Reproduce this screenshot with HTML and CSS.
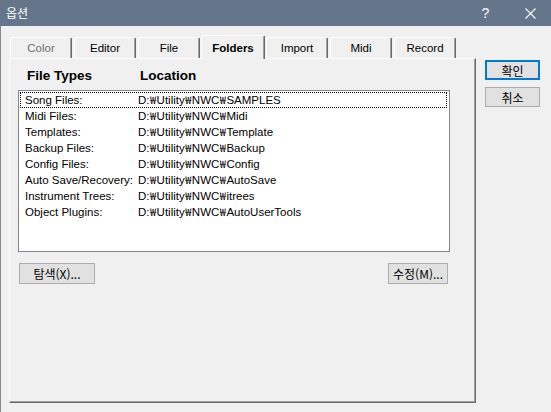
FILE: index.html
```html
<!DOCTYPE html>
<html lang="ko">
<head>
<meta charset="utf-8">
<title>옵션</title>
<link rel="stylesheet" href="styles.css">
</head>
<body>
<div class="window">
  <div class="titlebar">
    <span class="title">옵션</span>
    <span class="help">?</span>
    <svg class="close" width="11" height="11" viewBox="0 0 11 11"><path d="M0.5 0.5 L10.5 10.5 M10.5 0.5 L0.5 10.5" stroke="#fff" stroke-width="1.1" fill="none"/></svg>
  </div>
  <div class="client">
    <div class="tabs-area">
      <div class="tabstrip">
        <div class="tab disabled">Color</div>
        <div class="tab">Editor</div>
        <div class="tab">File</div>
        <div class="tab selected">Folders</div>
        <div class="tab">Import</div>
        <div class="tab">Midi</div>
        <div class="tab">Record</div>
      </div>
      <div class="panel">
        <div class="headers"><span class="h-type">File Types</span><span class="h-loc">Location</span></div>
        <div class="listbox">
          <div class="row focus"><span class="c1">Song Files:</span><span class="c2">D:<span class="won">₩</span>Utility<span class="won">₩</span>NWC<span class="won">₩</span>SAMPLES</span></div>
          <div class="row"><span class="c1">Midi Files:</span><span class="c2">D:<span class="won">₩</span>Utility<span class="won">₩</span>NWC<span class="won">₩</span>Midi</span></div>
          <div class="row"><span class="c1">Templates:</span><span class="c2">D:<span class="won">₩</span>Utility<span class="won">₩</span>NWC<span class="won">₩</span>Template</span></div>
          <div class="row"><span class="c1">Backup Files:</span><span class="c2">D:<span class="won">₩</span>Utility<span class="won">₩</span>NWC<span class="won">₩</span>Backup</span></div>
          <div class="row"><span class="c1">Config Files:</span><span class="c2">D:<span class="won">₩</span>Utility<span class="won">₩</span>NWC<span class="won">₩</span>Config</span></div>
          <div class="row"><span class="c1">Auto Save/Recovery:</span><span class="c2">D:<span class="won">₩</span>Utility<span class="won">₩</span>NWC<span class="won">₩</span>AutoSave</span></div>
          <div class="row"><span class="c1">Instrument Trees:</span><span class="c2">D:<span class="won">₩</span>Utility<span class="won">₩</span>NWC<span class="won">₩</span>itrees</span></div>
          <div class="row"><span class="c1">Object Plugins:</span><span class="c2">D:<span class="won">₩</span>Utility<span class="won">₩</span>NWC<span class="won">₩</span>AutoUserTools</span></div>
        </div>
        <div class="actions">
          <button class="btn browse">탐색(X)...</button>
          <button class="btn edit">수정(M)...</button>
        </div>
      </div>
    </div>
    <div class="side">
      <button class="btn side-btn default">확인</button>
      <button class="btn side-btn">취소</button>
    </div>
  </div>
</div>
</body>
</html>
```
FILE: styles.css
```css
html, body {
  margin: 0;
  padding: 0;
  width: 551px;
  height: 412px;
  overflow: hidden;
  background: #f0f0f0;
  font-family: "Liberation Sans", "Noto Sans CJK KR", Arial, sans-serif;
  font-size: 11px;
  color: #000;
}

.window {
  display: flex;
  flex-direction: column;
  height: 412px;
}

.titlebar {
  height: 26px;
  flex: 0 0 26px;
  background: #65768a;
  color: #fff;
  display: flex;
  align-items: center;
  padding-left: 6px;
}

.title {
  flex: 1;
  font-family: "Noto Sans CJK KR", sans-serif;
  font-size: 12px;
  line-height: 16px;
}

.help {
  width: 11px;
  text-align: center;
  font-family: "Liberation Sans", Arial, sans-serif;
  font-size: 14px;
  margin-right: 34px;
}

.close {
  display: block;
  margin-right: 15px;
}

.client {
  flex: 1;
  display: flex;
  border-left: 1px solid #8a8a8a;
  padding: 9px 0 0 8px;
}

.tabs-area {
  display: flex;
  flex-direction: column;
  width: 467px;
}

.tabstrip {
  display: flex;
  align-items: flex-end;
  height: 23px;
  gap: 2px;
  padding-left: 1px;
}

.tab {
  box-sizing: border-box;
  width: 62px;
  height: 21px;
  border-top: 1px solid #fff;
  border-left: 1px solid #fff;
  border-right: 1px solid #696969;
  border-radius: 2px 2px 0 0;
  box-shadow: inset -1px 0 #a0a0a0;
  display: flex;
  align-items: center;
  justify-content: center;
  background: #f0f0f0;
  font-size: 11.5px;
}

.tab.disabled {
  color: #6d6d6d;
}

.tab.selected {
  width: 64px;
  height: 24px;
  margin: 0 -1px -1px -1px;
  position: relative;
  z-index: 1;
  font-weight: bold;
  padding-top: 1px;
}

.panel {
  box-sizing: border-box;
  height: 345px;
  border-top: 1px solid #fff;
  border-left: 1px solid #fff;
  border-right: 1px solid #696969;
  border-bottom: 1px solid #696969;
  box-shadow: inset -1px -1px #a0a0a0;
  padding: 9px 0 0 8px;
}

.headers {
  display: flex;
  height: 16px;
  line-height: 16px;
  padding-left: 9px;
  margin-bottom: 6px;
  font-weight: bold;
  font-size: 13.5px;
}

.h-type {
  width: 113px;
}

.listbox {
  box-sizing: border-box;
  width: 432px;
  height: 162px;
  border: 1px solid #828790;
  background: #fff;
  padding: 1px 2px 0 1px;
}

.row {
  box-sizing: border-box;
  display: flex;
  height: 16px;
  line-height: 16px;
  padding-left: 5px;
  white-space: nowrap;
  font-size: 11.5px;
}

.row.focus {
  border: 1px dotted #000;
  padding-left: 4px;
  line-height: 14px;
}

.c1 {
  width: 113px;
}

.won {
  font-family: "Noto Sans CJK KR", sans-serif;
  font-size: 11px;
  line-height: 0;
  margin: 0 0.5px;
}

.actions {
  box-sizing: border-box;
  display: flex;
  justify-content: space-between;
  width: 432px;
  padding: 0 2px 0 1px;
  margin-top: 11px;
}

.btn {
  box-sizing: border-box;
  height: 21px;
  border: 1px solid #adadad;
  background: #e1e1e1;
  font-family: "Noto Sans CJK KR", sans-serif;
  font-size: 12px;
  line-height: 17px;
  padding: 0;
  color: #000;
  margin: 0;
}

.browse {
  width: 76px;
}

.edit {
  width: 60px;
}

.side {
  display: flex;
  flex-direction: column;
  gap: 7px;
  margin-left: 9px;
  padding-top: 25px;
}

.side-btn {
  width: 55px;
  height: 20px;
}

.side-btn.default {
  border: 2px solid #0078d7;
}
```
